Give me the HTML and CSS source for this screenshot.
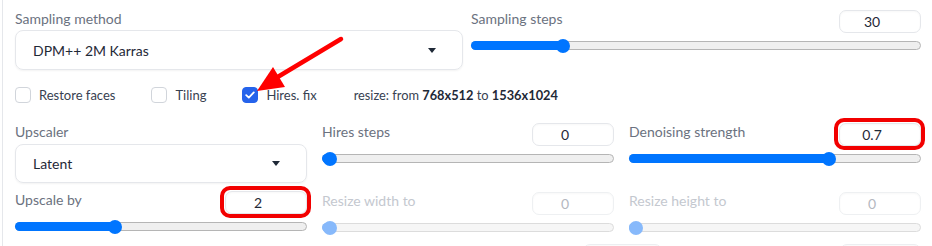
FILE: index.html
```html
<!DOCTYPE html>
<html lang="en">
  <head>
    <meta charset="UTF-8">
    <title>txt2img settings</title>
    <link rel="stylesheet" href="styles.css">
  </head>
  <body>
    <div class="panel">
      <div class="row-top">
        <div class="field">
          <span class="label">Sampling method</span>
          <div class="dropdown"><span>DPM++ 2M Karras</span><span class="caret"></span></div>
        </div>
        <div class="slider">
          <div class="slider-head"><span class="label">Sampling steps</span><div class="num">30</div></div>
          <div class="range"><div class="fill" style="width:20.3%"></div><span class="thumb" style="left:20.3%"></span></div>
        </div>
      </div>

      <div class="checks">
        <label class="check"><span class="box"></span>Restore faces</label>
        <label class="check"><span class="box"></span>Tiling</label>
        <label class="check"><span class="box on">
          <svg width="10" height="8" viewBox="0 0 10 8"><path d="M1.2 4.2 L3.8 6.6 L8.8 1.4" fill="none" stroke="#fff" stroke-width="1.8" stroke-linecap="round" stroke-linejoin="round"/></svg>
        </span>Hires. fix</label>
        <span class="resize-info">resize: from <b>768x512</b> to <b>1536x1024</b></span>
      </div>

      <div class="grid3">
        <div class="stack tight">
          <div class="field">
            <span class="label">Upscaler</span>
            <div class="dropdown small"><span>Latent</span><span class="caret"></span></div>
          </div>
          <div class="slider">
            <div class="slider-head"><span class="label">Upscale by</span><div class="num marked">2</div></div>
            <div class="range"><div class="fill" style="width:34%"></div><span class="thumb" style="left:34%"></span></div>
          </div>
        </div>
        <div class="stack">
          <div class="slider">
            <div class="slider-head"><span class="label">Hires steps</span><div class="num">0</div></div>
            <div class="range"><div class="fill" style="width:2.4%"></div><span class="thumb" style="left:2.4%"></span></div>
          </div>
          <div class="slider disabled">
            <div class="slider-head"><span class="label">Resize width to</span><div class="num">0</div></div>
            <div class="range"><div class="fill" style="width:2.4%"></div><span class="thumb" style="left:2.4%"></span></div>
          </div>
        </div>
        <div class="stack">
          <div class="slider">
            <div class="slider-head"><span class="label">Denoising strength</span><div class="num marked">0.7</div></div>
            <div class="range"><div class="fill" style="width:68.5%"></div><span class="thumb" style="left:68.5%"></span></div>
          </div>
          <div class="slider disabled">
            <div class="slider-head"><span class="label">Resize height to</span><div class="num">0</div></div>
            <div class="range"><div class="fill" style="width:2.1%"></div><span class="thumb" style="left:2.1%"></span></div>
          </div>
        </div>
      </div>

      <div class="more">
        <div class="num ghost first"></div>
        <div class="num ghost second"></div>
      </div>

      <!-- annotation arrow pointing at Hires. fix -->
      <svg class="arrow" width="932" height="246" viewBox="0 0 932 246">
        <line x1="341" y1="39" x2="276" y2="78" stroke="#f00" stroke-width="4.5" stroke-linecap="round"/>
        <polygon points="257,91 285,87 273,67" fill="#f00"/>
      </svg>
    </div>
  </body>
</html>
```

FILE: styles.css
```css
html, body {
  margin: 0;
  height: 100%;
  background: #fff;
  overflow: hidden;
}
body {
  font-family: Lato, "Noto Sans", sans-serif;
  font-size: 14px;
  color: #1f2937;
}
.panel {
  position: relative;
  margin-left: 2px;
  border-left: 1px solid #e5e7eb;
  padding: 9px 11px 0 12px;
  height: 100%;
  box-sizing: border-box;
}

.label {
  display: block;
  line-height: 20px;
  color: #6b7280;
}

/* first row */
.row-top {
  display: grid;
  grid-template-columns: 448px 1fr;
  gap: 8px;
}
.field .dropdown { margin-top: 1px; }
.dropdown {
  display: flex;
  align-items: center;
  justify-content: space-between;
  height: 40px;
  box-sizing: border-box;
  padding: 0 26px 0 17px;
  border: 1px solid #e5e7eb;
  border-radius: 8px;
  box-shadow: 0 1px 2px rgba(0, 0, 0, .05);
  color: #1f2937;
}
.dropdown.small { height: 39px; }
.caret {
  width: 0;
  height: 0;
  border-left: 4px solid transparent;
  border-right: 4px solid transparent;
  border-top: 5px solid #1f2937;
}

/* sliders */
.slider-head {
  display: flex;
  justify-content: space-between;
  align-items: flex-start;
  height: 24px;
}
.num {
  position: relative;
  width: 82px;
  height: 23px;
  margin-top: 1px;
  box-sizing: border-box;
  border: 1px solid #e5e7eb;
  border-radius: 7px;
  padding-right: 16px;
  text-align: center;
  line-height: 21px;
  color: #1f2937;
  box-shadow: inset 0 1px 2px rgba(0, 0, 0, .03);
}
.num.marked::after {
  content: "";
  position: absolute;
  inset: -6px -5px -5px -6px;
  border: 4px solid #f20000;
  border-radius: 10px;
}
.range {
  position: relative;
  height: 7px;
  margin: 8px 0 4px;
  border: 1px solid #b5b5b5;
  border-radius: 5px;
  background: #efefef;
}
.fill {
  height: 100%;
  margin: -1px 0 0 -1px;
  padding: 1px 0 1px 1px;
  border-radius: 5px 0 0 5px;
  background: #0075ff;
}
.thumb {
  position: absolute;
  top: 50%;
  width: 14px;
  height: 14px;
  border-radius: 50%;
  background: #0075ff;
  transform: translate(-50%, -50%);
}
.disabled .label { color: #c4c8cf; }
.disabled .num { color: #b4b8bf; border-color: #eef0f2; }
.disabled .range { border-color: #dcdcdc; background: #f6f6f6; }
.disabled .fill, .disabled .thumb { background: #87b9fb; }

/* checkboxes */
.checks {
  display: flex;
  align-items: center;
  height: 20px;
  margin-top: 15px;
}
.check {
  display: flex;
  align-items: center;
  gap: 8px;
  margin-right: 36px;
  font-size: 13px;
  color: #374151;
}
.check:nth-child(3) { margin-right: 37px; }
.box {
  display: flex;
  align-items: center;
  justify-content: center;
  width: 16px;
  height: 16px;
  box-sizing: border-box;
  border: 1px solid #d1d5db;
  border-radius: 4px;
}
.box.on {
  border-color: #2563eb;
  background: #2563eb;
}
.resize-info {
  color: #374151;
  font-size: 12.8px;
}
.resize-info b { color: #1f2937; font-weight: 700; }

/* upscaler grid */
.grid3 {
  display: grid;
  grid-template-columns: 1fr 1fr 1fr;
  gap: 15px;
  margin-top: 17px;
}
.stack {
  display: flex;
  flex-direction: column;
  gap: 24px;
}
.stack.tight { gap: 7px; }
.field .dropdown.small { margin-top: 2px; }

/* next row, cut off */
.more {
  display: flex;
  margin-top: 7px;
}
.num.ghost { border-color: #eceef1; }
.num.first { width: 79px; margin-left: 568px; }
.num.second { width: 81px; margin-left: auto; }

.arrow {
  position: absolute;
  top: 0;
  left: -3px;
  pointer-events: none;
}
```
